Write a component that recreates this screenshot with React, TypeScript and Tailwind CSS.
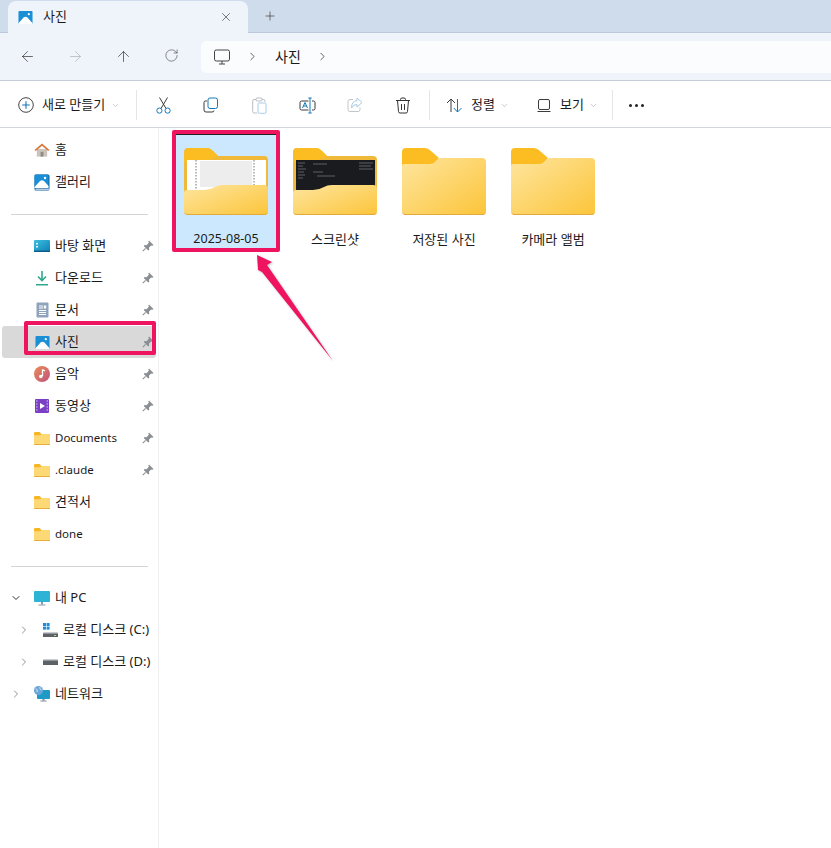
import React from "react";
import { ArrowLeft, ArrowRight, ArrowUp, RotateCw, ChevronRight, ChevronDown, X, Plus } from "lucide-react";

const PhotoIcon = ({ s = 16 }: { s?: number }) => (
  <svg width={s} height={s} viewBox="0 0 16 16">
    <rect x="0.5" y="1" width="15" height="14" rx="1" fill="#1b8fd6" />
    <path d="M0.5 14 L6 8 Q8 6.5 10 8 L15.5 14 V15 H0.5Z" fill="#fff" />
    <circle cx="11.5" cy="4.5" r="1.2" fill="#fff" />
  </svg>
);

const GalleryIcon = () => (
  <svg width="16" height="17" viewBox="0 0 16 17">
    <rect x="0.5" y="0.5" width="15" height="16" rx="1.5" fill="#175f9c" />
    <rect x="0.5" y="0.5" width="14" height="13.5" rx="1" fill="#1b8fd6" />
    <path d="M0.5 13 L6 7 Q8 5.5 10 7 L14.5 12 V14 H0.5Z" fill="#fff" />
    <rect x="1.5" y="14.6" width="14" height="1.2" fill="#d7e8f5" />
    <circle cx="11" cy="4" r="1.2" fill="#fff" />
  </svg>
);

const HomeIcon = () => (
  <svg width="17" height="16" viewBox="0 0 17 16">
    <path d="M3 7 H14 V15 H3Z" fill="#c9c3bb" />
    <rect x="7" y="10" width="3" height="5" fill="#8f8a84" />
    <path d="M0.5 8 L8.5 1 L16.5 8 L15 9 L8.5 3.6 L2 9Z" fill="#d9773a" />
  </svg>
);

const DesktopIcon = () => (
  <svg width="16" height="12" viewBox="0 0 16 12">
    <defs>
      <linearGradient id="dsk" x1="0" y1="0" x2="1" y2="1">
        <stop offset="0" stopColor="#3cc0e0" />
        <stop offset="1" stopColor="#0f7fb5" />
      </linearGradient>
    </defs>
    <rect x="0" y="0" width="16" height="12" rx="1" fill="url(#dsk)" />
    <rect x="2" y="3" width="2" height="1.5" fill="#e6f7fd" />
    <rect x="2" y="6" width="2" height="1.5" fill="#e6f7fd" />
    <rect x="0" y="10.6" width="16" height="1.4" fill="#0b5d88" />
  </svg>
);

const DownloadIcon = () => (
  <svg width="14" height="16" viewBox="0 0 14 16">
    <path d="M7 1 V10 M3 6.5 L7 10.5 L11 6.5" stroke="#2fa98c" strokeWidth="1.6" fill="none" />
    <rect x="1" y="14" width="12" height="1.5" fill="#2fa98c" />
  </svg>
);

const DocIcon = () => (
  <svg width="13" height="16" viewBox="0 0 13 16">
    <rect x="0.5" y="0.5" width="12" height="15" rx="1" fill="#8fa3bd" />
    <path d="M3 4 H7 M3 6 H7 M3 8.5 H10 M3 10.5 H10 M3 12.5 H10" stroke="#fff" strokeWidth="1" />
    <rect x="7.8" y="3.5" width="2.4" height="3" fill="#fff" />
  </svg>
);

const MusicIcon = () => (
  <svg width="16" height="16" viewBox="0 0 16 16">
    <defs>
      <linearGradient id="mus" x1="0" y1="0" x2="1" y2="1">
        <stop offset="0" stopColor="#ea8b55" />
        <stop offset="1" stopColor="#c2527f" />
      </linearGradient>
    </defs>
    <circle cx="8" cy="8" r="8" fill="url(#mus)" />
    <path d="M8.5 3.5 V10 M8.5 3.5 L11 5" stroke="#fff" strokeWidth="1.3" fill="none" />
    <circle cx="6.8" cy="10.5" r="1.8" fill="#fff" />
  </svg>
);

const VideoIcon = () => (
  <svg width="14" height="14" viewBox="0 0 14 14">
    <rect x="0" y="0" width="14" height="14" rx="1" fill="#7a3fc4" />
    <path d="M5 4 L10 7 L5 10Z" fill="#fff" />
    <path d="M1 2 H2.5 M1 5 H2.5 M1 8 H2.5 M1 11 H2.5 M11.5 2 H13 M11.5 5 H13 M11.5 8 H13 M11.5 11 H13" stroke="#d9c6f3" strokeWidth="1" />
  </svg>
);

const SmallFolder = () => (
  <svg width="16" height="13" viewBox="0 0 16 13">
    <path d="M0 1.2 Q0 0 1.2 0 H5.5 L7.5 2 H15 Q16 2 16 3 V6 H0Z" fill="#f5b622" />
    <path d="M0 3.2 H5.8 L7.5 2 H15 Q16 2 16 3 V12 Q16 13 15 13 H1 Q0 13 0 12Z" fill="#fdd975" />
    <rect x="0" y="12" width="16" height="1" rx="0.5" fill="#e8ad3c" />
  </svg>
);

const PcIcon = () => (
  <svg width="16" height="15" viewBox="0 0 16 15">
    <rect x="0" y="0" width="16" height="11" rx="1" fill="#2db3d6" />
    <rect x="7" y="11" width="2" height="2.5" fill="#8b98a3" />
    <rect x="4.5" y="13.5" width="7" height="1" fill="#8b98a3" />
  </svg>
);

const DriveC = () => (
  <svg width="15" height="14" viewBox="0 0 15 14">
    <rect x="0" y="0" width="3" height="3" fill="#1c8fd8" />
    <rect x="3.6" y="0" width="3" height="3" fill="#1c8fd8" />
    <rect x="0" y="3.6" width="3" height="3" fill="#1c8fd8" />
    <rect x="3.6" y="3.6" width="3" height="3" fill="#1c8fd8" />
    <path d="M1 9 H14 L15 11 V14 H0 V11Z" fill="#5d6267" />
    <path d="M1 9 H14 L14.6 10.5 H0.4Z" fill="#c8ccd0" />
    <rect x="11" y="12" width="2" height="1" fill="#9be07f" />
  </svg>
);

const DriveD = () => (
  <svg width="15" height="6" viewBox="0 0 15 6">
    <path d="M1 0 H14 L15 2 V6 H0 V2Z" fill="#5d6267" />
    <path d="M1 0 H14 L14.6 1.5 H0.4Z" fill="#c8ccd0" />
  </svg>
);

const NetIcon = () => (
  <svg width="16" height="16" viewBox="0 0 16 16">
    <rect x="3" y="4" width="13" height="9" rx="1" fill="#1e9ac7" />
    <rect x="8.5" y="13" width="2" height="1.5" fill="#7f8d98" />
    <rect x="6.5" y="14.5" width="6" height="1" fill="#7f8d98" />
    <circle cx="4.5" cy="4.5" r="4.5" fill="#6aa7d8" />
    <path d="M2 2.5 Q4 4 3 6 M6 1 Q5 3 7.5 4" stroke="#d8e8f5" strokeWidth="1" fill="none" />
  </svg>
);

const Pin = () => (
  <svg width="12" height="12" viewBox="0 0 12 12">
    <path d="M7 0.5 L11.5 5 L10.5 5.8 L9.3 5.4 L7 7.6 L7.2 9.8 L6.2 10.4 L1.8 5.9 L2.4 5 L4.6 5.2 L6.8 2.8 L6.4 1.5Z" fill="#8a8f94" />
    <path d="M3.6 8.4 L0.8 11.2" stroke="#8a8f94" strokeWidth="1.1" />
  </svg>
);

const Monitor = () => (
  <svg width="16" height="16" viewBox="0 0 16 16" fill="none" stroke="#444" strokeWidth="1">
    <rect x="0.5" y="1" width="15" height="11" rx="1.8" />
    <path d="M8 12 V15 M5 15 H11" />
  </svg>
);

const NewIcon = () => (
  <svg width="16" height="16" viewBox="0 0 16 16" fill="none">
    <circle cx="8" cy="8" r="7.3" stroke="#444" />
    <path d="M8 4.2 V11.8 M4.2 8 H11.8" stroke="#1478b8" strokeWidth="1.1" />
  </svg>
);

const CutIcon = () => (
  <svg width="15" height="17" viewBox="0 0 15 17" fill="none">
    <path d="M3.5 0.5 L10 11.5 M11.5 0.5 L5 11.5" stroke="#3b3b3b" />
    <circle cx="3.4" cy="13.6" r="2.6" stroke="#1478b8" />
    <circle cx="11.6" cy="13.6" r="2.6" stroke="#1478b8" />
  </svg>
);

const CopyIcon = () => (
  <svg width="16" height="16" viewBox="0 0 16 16" fill="none">
    <path d="M4 4 H2.5 Q1 4 1 5.5 V13 Q1 15 3 15 H9 Q11 15 11 13.5" stroke="#3b3b3b" />
    <rect x="5" y="1" width="9.5" height="10.5" rx="2" stroke="#1478b8" />
  </svg>
);

const PasteIcon = () => (
  <svg width="15" height="17" viewBox="0 0 15 17" fill="none">
    <path d="M4 2.5 H2 Q0.7 2.5 0.7 4 V14.5 Q0.7 16 2 16 H5" stroke="#b9bec3" />
    <path d="M10 2.5 H11.5 Q13 2.5 13 4 V5" stroke="#b9bec3" />
    <rect x="4" y="1" width="6" height="3" rx="1" stroke="#b9bec3" />
    <rect x="6" y="6" width="8" height="10.3" rx="1.3" stroke="#a7cbe4" />
  </svg>
);

const RenameIcon = () => (
  <svg width="17" height="17" viewBox="0 0 17 17" fill="none">
    <path d="M9.5 4 H2.5 Q1 4 1 5.5 V11.5 Q1 13 2.5 13 H9.5" stroke="#3b3b3b" />
    <path d="M13 4 H14.5 Q16 4 16 5.5 V11.5 Q16 13 14.5 13 H13" stroke="#3b3b3b" />
    <path d="M11 1 V16 M9.3 1 H12.7 M9.3 16 H12.7" stroke="#1478b8" />
    <path d="M3.5 11 L6 5.5 L8.5 11 M4.5 9 H7.5" stroke="#1478b8" />
  </svg>
);

const ShareIcon = () => (
  <svg width="16" height="16" viewBox="0 0 16 16" fill="none">
    <path d="M6 2.5 H3 Q1 2.5 1 4.5 V12.5 Q1 14.5 3 14.5 H11 Q13 14.5 13 12.5 V10.5" stroke="#c2c6ca" />
    <path d="M10 1 L15 5.5 L10 10 V7.5 Q6 7.5 4.5 11 Q4.5 4 10 3.6Z" stroke="#a7cbe4" />
  </svg>
);

const TrashIcon = () => (
  <svg width="16" height="17" viewBox="0 0 16 17" fill="none" stroke="#333">
    <path d="M1 3.5 H15" />
    <path d="M5.5 3.5 V2.5 Q5.5 1 7 1 H9 Q10.5 1 10.5 2.5 V3.5" />
    <path d="M2.5 3.5 L3.5 14.5 Q3.6 16 5 16 H11 Q12.4 16 12.5 14.5 L13.5 3.5" />
    <path d="M6.5 7 V13 M9.5 7 V13" />
  </svg>
);

const SortIcon = () => (
  <svg width="17" height="15" viewBox="0 0 17 15" fill="none">
    <path d="M5 14 V1 M1 5 L5 1 L9 5" stroke="#3b3b3b" />
    <path d="M11.5 1 V14 M7.8 10 L11.5 14 L15.5 10" stroke="#1478b8" />
  </svg>
);

const ViewIcon = () => (
  <svg width="14" height="13" viewBox="0 0 14 13" fill="none" stroke="#3b3b3b">
    <rect x="1.5" y="0.5" width="11" height="10" rx="1.5" />
    <path d="M0.5 12.5 H13.5" />
  </svg>
);

const Folder = ({ preview }: { preview?: "light" | "dark" }) => {
  const id = preview ?? "plain";
  return (
    <svg width="84" height="67" viewBox="0 0 84 67">
      <defs>
        <linearGradient id={`fg-${id}`} x1="0" y1="0" x2="1" y2="1">
          <stop offset="0" stopColor="#fee59e" />
          <stop offset="1" stopColor="#fcc53a" />
        </linearGradient>
      </defs>
      {preview ? (
        <>
          <path d="M0 4 Q0 0 4 0 H23 Q26 0 29 3 L34 8 H80 Q84 8 84 12 V60 H0Z" fill="#f0b93a" />
          <path d="M0 14 Q0 0 4 0 H23 Q26 0 29 3 L34 8 L20 14Z" fill="#fcbd22" />
          {preview === "light" ? (
            <>
              <rect x="3" y="12" width="79" height="32" fill="#fff" />
              {[14, 16, 18, 20, 22, 24, 26, 28, 30, 32, 34, 36, 38].map((y) => (
                <path key={y} d="M16 0 H68" transform={`translate(0 ${y})`} stroke="#d2d2d2" strokeWidth="0.8" />
              ))}
              <path d="M12 12 V44 M70 12 V44" stroke="#8a8a8a" strokeWidth="1.2" strokeDasharray="1.5 1.5" />
            </>
          ) : (
            <>
              <rect x="3" y="12" width="79" height="32" fill="#1a1b1e" />
              <path d="M5 15 H12 M5 18 H10 M5 21 H13 M5 24 H11 M5 27 H12 M5 30 H10 M20 16 H34 M20 24 H30 M24 28 H42 M66 15 H80 M66 18 H78 M66 21 H80" stroke="#6f7277" strokeWidth="0.8" />
            </>
          )}
          <path d="M3 42 H20 Q26 42 31 39 Q34 37 39 37 H80 Q84 37 84 41 V63 Q84 67 80 67 H4 Q0 67 0 63 V45 Q0 42 3 42Z" fill={`url(#fg-${id})`} />
          <path d="M0 63 Q0 67 4 67 H80 Q84 67 84 63 Q84 66 80 66 H4 Q0 66 0 63Z" fill="#e2a93c" />
        </>
      ) : (
        <>
          <path d="M0 4 Q0 0 4 0 H23 Q26 0 29 3 L37 10 L30 18 H0Z" fill="#fcbd22" />
          <path d="M2 16 H28 Q31 16 33 14 L36 11 Q37 10 39 10 H80 Q84 10 84 14 V63 Q84 67 80 67 H4 Q0 67 0 63 V18 Q0 16 2 16Z" fill={`url(#fg-${id})`} />
          <path d="M0 63 Q0 67 4 67 H80 Q84 67 84 63 Q84 66 80 66 H4 Q0 66 0 63Z" fill="#e2a93c" />
        </>
      )}
    </svg>
  );
};

type NavItem = { label: string; icon: React.ReactNode; pin?: boolean; selected?: boolean; latin?: boolean };

const Row = ({ label, icon, pin, selected, latin }: NavItem) => (
  <div className={`h-8 flex items-center ml-[2px] w-[154px] rounded-[3px] ${selected ? "bg-[#d9d9d9]" : ""}`}>
    <div className="w-[16px] ml-[32px] flex justify-center items-center shrink-0">{icon}</div>
    <span className={`flex-1 whitespace-nowrap ${latin ? "ml-[5px] text-[11.5px]" : "ml-[5px]"}`}>{label}</span>
    {pin && (
      <span className="mr-[2px] flex">
        <Pin />
      </span>
    )}
  </div>
);

const Divider = () => (
  <div className="h-8 flex items-center pl-[11px]">
    <div className="h-px w-[137px] bg-[#d4d4d4]" />
  </div>
);

const Tree = ({ label, icon, indent, open }: { label: string; icon: React.ReactNode; indent?: boolean; open?: boolean }) => (
  <div className={`h-8 flex items-center ${indent ? "pl-[18px]" : "pl-[10px]"}`}>
    <div className="w-3 flex justify-center">
      {open ? <ChevronDown size={14} strokeWidth={2} color="#333" /> : <ChevronRight size={14} strokeWidth={1.4} color="#666" />}
    </div>
    <div className="w-[16px] ml-[12px] flex justify-center">{icon}</div>
    <span className="ml-[5px] whitespace-nowrap">{label}</span>
  </div>
);

const Sep = () => <div className="h-[30px] w-px bg-[#e6e6e6]" />;

const CmdIcon = ({ children, className = "" }: { children: React.ReactNode; className?: string }) => (
  <div className={`w-[48px] flex justify-center ${className}`}>{children}</div>
);

const Item = ({ label, preview, selected, latin }: { label: string; preview?: "light" | "dark"; selected?: boolean; latin?: boolean }) => (
  <div className={`w-[100px] h-[114px] flex flex-col items-center ${selected ? "bg-[#cce8ff] shadow-[inset_0_1px_0_#222]" : ""}`}>
    <div className="mt-[14px] flex">
      <Folder preview={preview} />
    </div>
    <span className={`mt-[15px] leading-[18px] text-[#1a1a1a] whitespace-nowrap ${latin ? "text-[12.5px]" : "text-[13px]"}`}>{label}</span>
  </div>
);

export default function App() {
  return (
    <div className="relative w-[831px] h-[848px] overflow-hidden bg-white text-[13px] text-[#1a1a1a] font-['Noto_Sans','Noto_Sans_CJK_KR',sans-serif]">
      <div className="h-[33px] bg-[#cfdcec] border-b border-[#bccadb] flex items-start">
        <div className="ml-[8px] mt-px w-[240px] h-[32px] bg-[#eff4fb] rounded-t-[8px] flex items-center">
          <div className="ml-[10px] flex">
            <PhotoIcon s={15} />
          </div>
          <span className="ml-[10px] flex-1">사진</span>
          <X size={14} strokeWidth={1.1} color="#333" className="mr-[15px]" />
        </div>
        <div className="ml-[15px] h-[32px] flex items-center">
          <Plus size={14} strokeWidth={1.1} color="#333" />
        </div>
      </div>

      <div className="h-[47px] bg-[#eff4fb] border-b border-[#c5ccd6] flex items-center box-content">
        <div className="w-[201px] flex shrink-0 pl-[3px]">
          <div className="w-[48px] flex justify-center">
            <ArrowLeft size={17} strokeWidth={1} color="#333" />
          </div>
          <div className="w-[48px] flex justify-center">
            <ArrowRight size={17} strokeWidth={1} color="#aab0b6" />
          </div>
          <div className="w-[48px] flex justify-center">
            <ArrowUp size={17} strokeWidth={1} color="#333" />
          </div>
          <div className="w-[48px] flex justify-center">
            <RotateCw size={15} strokeWidth={1} color="#444" />
          </div>
        </div>
        <div className="flex-1 h-[32px] bg-[#fbfcfe] rounded-l-[5px] flex items-center pl-[13px]">
          <Monitor />
          <ChevronRight size={13} strokeWidth={1.4} color="#333" className="ml-[16px]" />
          <span className="ml-[16px] text-[14px]">사진</span>
          <ChevronRight size={13} strokeWidth={1.4} color="#333" className="ml-[15px]" />
        </div>
      </div>

      <div className="h-[44px] pt-[2px] bg-white border-b border-[#d2d5d9] flex items-center box-content">
        <div className="w-[136px] flex items-center pl-[18px] shrink-0">
          <NewIcon />
          <span className="ml-[8px] whitespace-nowrap">새로 만들기</span>
          <ChevronDown size={9} strokeWidth={1} color="#777" className="ml-[6px]" />
        </div>
        <Sep />
        <CmdIcon className="ml-[2px]">
          <CutIcon />
        </CmdIcon>
        <CmdIcon>
          <CopyIcon />
        </CmdIcon>
        <CmdIcon>
          <PasteIcon />
        </CmdIcon>
        <CmdIcon>
          <RenameIcon />
        </CmdIcon>
        <CmdIcon>
          <ShareIcon />
        </CmdIcon>
        <CmdIcon>
          <TrashIcon />
        </CmdIcon>
        <div className="ml-[2px] flex">
          <Sep />
        </div>
        <div className="ml-[16px] flex items-center w-[76px]">
          <SortIcon />
          <span className="ml-[8px] whitespace-nowrap">정렬</span>
          <ChevronDown size={9} strokeWidth={1} color="#777" className="ml-[5px]" />
        </div>
        <div className="ml-[15px] flex items-center w-[75px]">
          <ViewIcon />
          <span className="ml-[9px] whitespace-nowrap">보기</span>
          <ChevronDown size={9} strokeWidth={1} color="#777" className="ml-[5px]" />
        </div>
        <Sep />
        <div className="ml-[16px] flex gap-[3px]">
          <span className="w-[3px] h-[3px] rounded-full bg-[#222]" />
          <span className="w-[3px] h-[3px] rounded-full bg-[#222]" />
          <span className="w-[3px] h-[3px] rounded-full bg-[#222]" />
        </div>
      </div>

      <div className="flex h-[720px]">
        <nav className="w-[159px] shrink-0 border-r border-[#f0f0f0] pt-[6px]">
          <Row label="홈" icon={<HomeIcon />} />
          <Row label="갤러리" icon={<GalleryIcon />} />
          <Divider />
          <Row label="바탕 화면" icon={<DesktopIcon />} pin />
          <Row label="다운로드" icon={<DownloadIcon />} pin />
          <Row label="문서" icon={<DocIcon />} pin />
          <Row label="사진" icon={<PhotoIcon s={15} />} pin selected />
          <Row label="음악" icon={<MusicIcon />} pin />
          <Row label="동영상" icon={<VideoIcon />} pin />
          <Row label="Documents" icon={<SmallFolder />} pin latin />
          <Row label=".claude" icon={<SmallFolder />} pin latin />
          <Row label="견적서" icon={<SmallFolder />} />
          <Row label="done" icon={<SmallFolder />} latin />
          <Divider />
          <Tree label="내 PC" icon={<PcIcon />} open />
          <Tree label="로컬 디스크 (C:)" icon={<DriveC />} indent />
          <Tree label="로컬 디스크 (D:)" icon={<DriveD />} indent />
          <Tree label="네트워크" icon={<NetIcon />} />
        </nav>
        <main className="flex-1 pl-[17px] pt-[6px] flex items-start gap-[9px]">
          <Item label="2025-08-05" preview="light" selected latin />
          <Item label="스크린샷" preview="dark" />
          <Item label="저장된 사진" />
          <Item label="카메라 앨범" />
        </main>
      </div>

      {/* annotations over the page */}
      <div className="absolute left-[172px] top-[130px] w-[108px] h-[122px] border-[4px] border-[#ee1460] rounded-[2px]" />
      <div className="absolute left-[24px] top-[321px] w-[132px] h-[34px] border-[4px] border-[#ee1460] rounded-[2px]" />
      <svg className="absolute left-[250px] top-[250px] drop-shadow-[1px_1px_1px_rgba(0,0,0,0.25)]" width="90" height="120" viewBox="250 250 90 120">
        <polygon points="257,255 272,262 267,265 333,361 262,272 258,270" fill="#ee1460" />
      </svg>
    </div>
  );
}
